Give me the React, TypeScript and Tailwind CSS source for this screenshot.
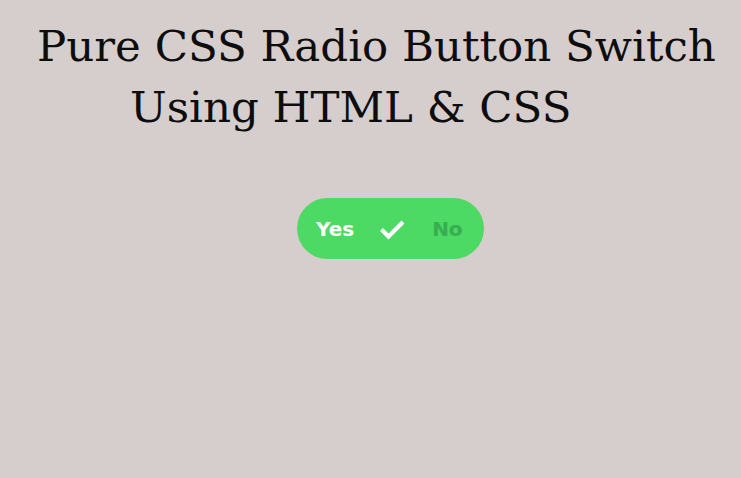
export default function App() {
	return (
		<div className="min-h-[478px] w-full bg-[#d6cdcd] overflow-hidden">
			<h1 className="pt-[16px] font-['DejaVu_Serif',serif] text-[43.5px] leading-[61px] font-normal text-[#0d0d0d] whitespace-nowrap">
				<span className="block pl-[37px]">Pure CSS Radio Button Switch</span>
				<span className="block pl-[130px]">Using HTML &amp; CSS</span>
			</h1>
			<div className="pl-[297px] pt-[60px]">
				<div className="flex h-[61px] w-[187px] items-center rounded-full bg-[#4cd964] pl-[19px] pt-[1px] font-['DejaVu_Sans',sans-serif] text-[20px] font-bold">
					<span className="text-white">Yes</span>
					<svg
						width="27"
						height="21"
						viewBox="0 0 27 21"
						className="ml-[25px]"
					>
						<path
							d="M2.5 10.5 L9.5 17.5 L24 3"
							fill="none"
							stroke="white"
							strokeWidth="4.2"
						/>
					</svg>
					<span className="ml-[26px] text-[#37ae4f]">No</span>
				</div>
			</div>
		</div>
	);
}
